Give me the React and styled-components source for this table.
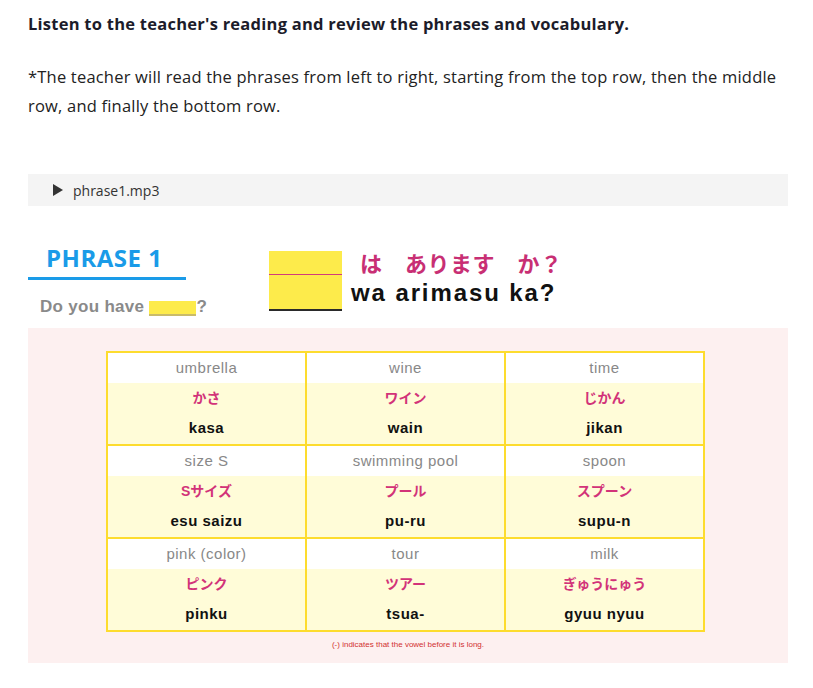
import React from "react";
import styled, { createGlobalStyle } from "styled-components";

const GlobalStyle = createGlobalStyle`
  html, body {
    margin: 0;
    padding: 0;
    background: #ffffff;
  }
  * {
    box-sizing: border-box;
  }
`;

const JP = `"Liberation Sans", "Noto Sans CJK JP", sans-serif`;

const Page = styled.div`
  width: 813px;
  padding: 12px 25px 24px 28px;
  font-family: "Open Sans", sans-serif;
`;

const Heading = styled.h3`
  margin: 0;
  font-size: 16.5px;
  line-height: 24px;
  font-weight: 700;
  color: #1c1c2a;
  letter-spacing: 0.25px;
`;

const Note = styled.p`
  margin: 26px 0 0;
  font-size: 16.5px;
  line-height: 29px;
  color: #222222;
  letter-spacing: 0.2px;
`;

const AudioBar = styled.div`
  margin-top: 54px;
  height: 32px;
  background: #f4f4f4;
  display: flex;
  align-items: center;
  padding-left: 25px;
  gap: 10px;
  font-size: 14px;
  color: #333333;
`;

const PlayIcon = styled.span`
  width: 0;
  height: 0;
  border-top: 6px solid transparent;
  border-bottom: 6px solid transparent;
  border-left: 10px solid #333333;
`;

const PhraseSection = styled.div`
  margin-top: 36px;
  display: flex;
  align-items: flex-start;
`;

const LeftBlock = styled.div`
  width: 158px;
  flex-shrink: 0;
`;

const PhraseTitle = styled.div`
  font-size: 24px;
  line-height: 32px;
  font-weight: 700;
  color: #1a9be8;
  padding: 0 0 3px 18px;
  border-bottom: 3px solid #1a9be8;
  letter-spacing: 0.5px;
`;

const Question = styled.div`
  margin-top: 17px;
  padding-left: 12px;
  font-family: "Liberation Sans", sans-serif;
  font-size: 17px;
  line-height: 20px;
  font-weight: 700;
  color: #8a8a8a;
  white-space: nowrap;
  display: flex;
  align-items: center;
  letter-spacing: 0.3px;
`;

const Blank = styled.span`
  flex-shrink: 0;
  display: inline-block;
  width: 47px;
  height: 15px;
  margin: 3px 0 0 5px;
  background: #fdeb4b;
  border-bottom: 2px solid #c9bb6a;
`;

const Pattern = styled.div`
  margin: 9px 0 0 83px;
  display: grid;
  grid-template-columns: 73px auto;
  grid-template-rows: 24px 36px;
`;

const Slot = styled.div`
  background: #fdeb4b;
  border-bottom: ${(p) => (p.$last ? "2px solid #2a2a2a" : "1px solid #d23a7a")};
`;

const KanaLine = styled.div`
  padding-left: 18px;
  font-family: "Noto Sans CJK JP", sans-serif;
  font-size: 22px;
  line-height: 22px;
  font-weight: 700;
  color: #c82f74;
  white-space: pre;
  letter-spacing: 0.5px;
`;

const RomajiLine = styled.div`
  padding-left: 9px;
  font-family: "Liberation Sans", sans-serif;
  font-size: 24px;
  line-height: 36px;
  font-weight: 700;
  color: #111111;
  letter-spacing: 1.9px;
  white-space: nowrap;
`;

const Panel = styled.div`
  margin-top: 11px;
  background: #fdf0f0;
  padding: 23px 0 12px;
  display: flex;
  flex-direction: column;
  align-items: center;
`;

const Table = styled.div`
  width: 599px;
  margin-left: -5px;
  display: grid;
  grid-template-columns: repeat(3, 1fr);
  gap: 2px;
  background: #fddc2e;
  border: 2px solid #fddc2e;
`;

const Cell = styled.div`
  display: grid;
  grid-template-rows: 30px 31px 30px;
  text-align: center;
`;

const English = styled.div`
  background: #ffffff;
  font-family: ${JP};
  font-size: 15px;
  line-height: 30px;
  color: #888888;
  letter-spacing: 0.5px;
`;

const Kana = styled.div`
  background: #fffcd8;
  font-family: ${JP};
  font-size: 14px;
  line-height: 31px;
  font-weight: 700;
  color: #d23379;
`;

const Romaji = styled.div`
  background: #fffcd8;
  font-family: "Liberation Sans", sans-serif;
  font-size: 15px;
  line-height: 28px;
  font-weight: 700;
  color: #111111;
  letter-spacing: 0.5px;
`;

const Footnote = styled.div`
  margin-top: 7px;
  font-family: "Liberation Sans", sans-serif;
  font-size: 8px;
  line-height: 12px;
  color: #d23030;
`;

const words = [
  { en: "umbrella", kana: "かさ", ro: "kasa" },
  { en: "wine", kana: "ワイン", ro: "wain" },
  { en: "time", kana: "じかん", ro: "jikan" },
  { en: "size S", kana: "Sサイズ", ro: "esu saizu" },
  { en: "swimming pool", kana: "プール", ro: "pu-ru" },
  { en: "spoon", kana: "スプーン", ro: "supu-n" },
  { en: "pink (color)", kana: "ピンク", ro: "pinku" },
  { en: "tour", kana: "ツアー", ro: "tsua-" },
  { en: "milk", kana: "ぎゅうにゅう", ro: "gyuu nyuu" },
];

const App = () => (
  <>
    <GlobalStyle />
    <Page>
      <Heading>
        Listen to the teacher's reading and review the phrases and vocabulary.
      </Heading>
      <Note>
        *The teacher will read the phrases from left to right, starting from
        the top row, then the middle row, and finally the bottom row.
      </Note>
      <AudioBar>
        <PlayIcon />
        <span>phrase1.mp3</span>
      </AudioBar>
      <PhraseSection>
        <LeftBlock>
          <PhraseTitle>PHRASE 1</PhraseTitle>
          <Question>
            Do you have<Blank />?
          </Question>
        </LeftBlock>
        <Pattern>
          <Slot />
          <KanaLine>{"は　あります　か？"}</KanaLine>
          <Slot $last />
          <RomajiLine>wa arimasu ka?</RomajiLine>
        </Pattern>
      </PhraseSection>
      <Panel>
        <Table>
          {words.map((w) => (
            <Cell key={w.en}>
              <English>{w.en}</English>
              <Kana>{w.kana}</Kana>
              <Romaji>{w.ro}</Romaji>
            </Cell>
          ))}
        </Table>
        <Footnote>(-) indicates that the vowel before it is long.</Footnote>
      </Panel>
    </Page>
  </>
);

export default App;
